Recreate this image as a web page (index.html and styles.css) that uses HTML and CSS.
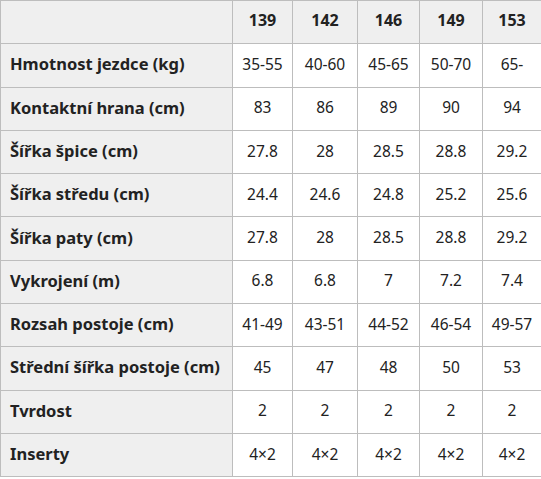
FILE: index.html
```html
<!DOCTYPE html>
<html lang="cs">
<head>
<meta charset="utf-8">
<link rel="stylesheet" href="styles.css">
</head>
<body>
<table class="spec">
  <colgroup>
    <col class="c-label"><col class="c1"><col class="c2"><col class="c3"><col class="c4"><col class="c5">
  </colgroup>
  <thead>
    <tr><th class="label"></th><th>139</th><th>142</th><th>146</th><th>149</th><th>153</th></tr>
  </thead>
  <tbody>
    <tr><th class="label">Hmotnost jezdce (kg)</th><td>35-55</td><td>40-60</td><td>45-65</td><td>50-70</td><td>65-</td></tr>
    <tr><th class="label">Kontaktní hrana (cm)</th><td>83</td><td>86</td><td>89</td><td>90</td><td>94</td></tr>
    <tr><th class="label">Šířka špice (cm)</th><td>27.8</td><td>28</td><td>28.5</td><td>28.8</td><td>29.2</td></tr>
    <tr><th class="label">Šířka středu (cm)</th><td>24.4</td><td>24.6</td><td>24.8</td><td>25.2</td><td>25.6</td></tr>
    <tr><th class="label">Šířka paty (cm)</th><td>27.8</td><td>28</td><td>28.5</td><td>28.8</td><td>29.2</td></tr>
    <tr><th class="label">Vykrojení (m)</th><td>6.8</td><td>6.8</td><td>7</td><td>7.2</td><td>7.4</td></tr>
    <tr><th class="label">Rozsah postoje (cm)</th><td>41-49</td><td>43-51</td><td>44-52</td><td>46-54</td><td>49-57</td></tr>
    <tr><th class="label">Střední šířka postoje (cm)</th><td>45</td><td>47</td><td>48</td><td>50</td><td>53</td></tr>
    <tr><th class="label">Tvrdost</th><td>2</td><td>2</td><td>2</td><td>2</td><td>2</td></tr>
    <tr><th class="label">Inserty</th><td>4×2</td><td>4×2</td><td>4×2</td><td>4×2</td><td>4×2</td></tr>
  </tbody>
</table>
</body>
</html>
```

FILE: styles.css
```css
html, body {
  margin: 0;
  padding: 0;
  background: #ffffff;
}
.spec {
  border-collapse: collapse;
  table-layout: fixed;
  width: 541px;
  font-family: "Noto Sans", "DejaVu Sans", sans-serif;
  font-size: 15.5px;
  line-height: 1.1;
  color: #222222;
}
.c-label { width: 232px; }
.c1 { width: 60px; }
.c2 { width: 65px; }
.c3 { width: 62px; }
.c4 { width: 63px; }
.c5 { width: 59px; }
.spec th, .spec td {
  border: 1px solid #bdbdbd;
  height: 43.3px;
  padding: 0 0 2px;
  text-align: center;
  vertical-align: middle;
  box-sizing: border-box;
}
.spec thead th {
  background: #efefef;
  font-weight: 700;
  font-size: 16px;
}
.spec th.label {
  background: #efefef;
  text-align: left;
  padding-left: 9px;
  font-weight: 700;
  font-size: 16.5px;
}
.spec td {
  background: #ffffff;
  font-weight: 400;
}
```
